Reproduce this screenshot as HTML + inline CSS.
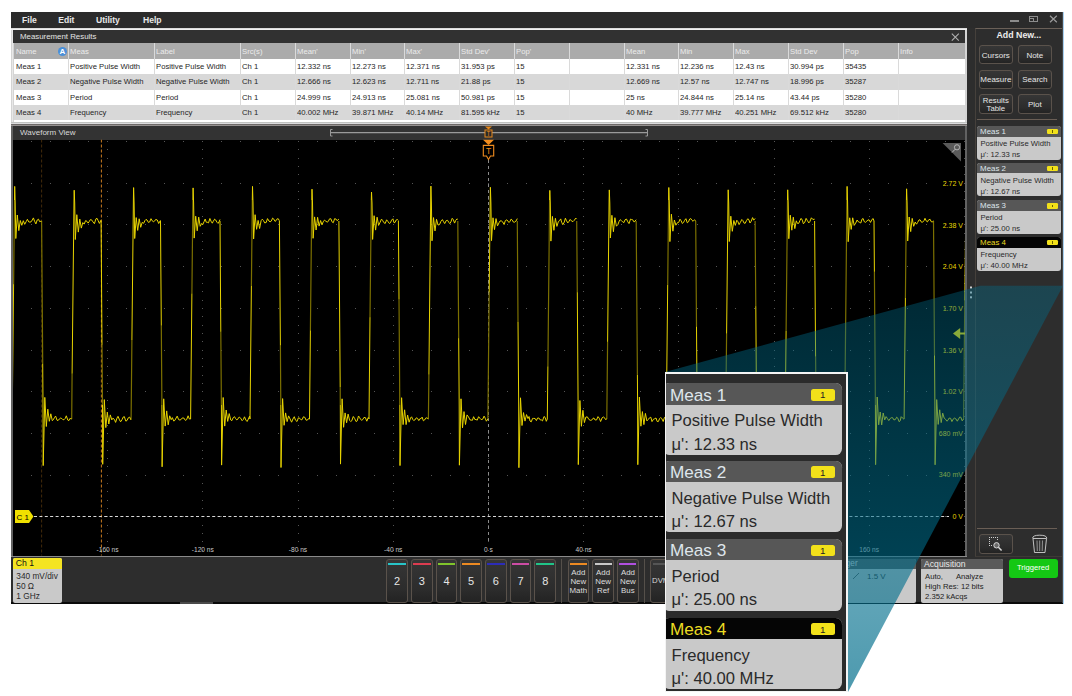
<!DOCTYPE html>
<html><head><meta charset="utf-8">
<style>
*{box-sizing:border-box}
body{margin:0;width:1072px;height:696px;position:relative;overflow:hidden;background:#fff;font-family:"Liberation Sans", sans-serif}
.a{position:absolute}
.t{position:absolute;white-space:nowrap}
.btn{border:1px solid #5a524b;border-radius:3px;background:linear-gradient(#363636,#2c2c2c 70%,#232323)}
</style></head><body>
<div class="a" style="left:11.00px;top:12.30px;width:1052.00px;height:591.00px;background:#2d2d2d;"></div>
<div class="a" style="left:11.00px;top:602.30px;width:1052.00px;height:1.30px;background:#0a0a0a;"></div>
<div class="a" style="left:180.00px;top:602.30px;width:33.00px;height:1.30px;background:#4a4a4a;"></div>
<div class="a" style="left:1061.60px;top:12.30px;width:1.10px;height:591.00px;background:#4a4a4a;"></div>
<div class="a" style="left:1062.70px;top:12.30px;width:1.00px;height:591.30px;background:#a8d0f0;"></div>
<div class="a" style="left:11.00px;top:12.30px;width:1051.00px;height:15.70px;background:#2b2b2b;"></div>
<div class="t" style="top:16.02px;font-size:8.60px;line-height:8.60px;color:#e8e8e8;font-weight:bold;left:22.00px;">File</div>
<div class="t" style="top:16.02px;font-size:8.60px;line-height:8.60px;color:#e8e8e8;font-weight:bold;left:58.20px;">Edit</div>
<div class="t" style="top:16.02px;font-size:8.60px;line-height:8.60px;color:#e8e8e8;font-weight:bold;left:96.00px;">Utility</div>
<div class="t" style="top:16.02px;font-size:8.60px;line-height:8.60px;color:#e8e8e8;font-weight:bold;left:143.00px;">Help</div>
<div class="a" style="left:1010.00px;top:20.20px;width:9.00px;height:1.80px;background:#8c8c8c;"></div>
<div class="a" style="left:1029px;top:15.8px;width:9px;height:6px;border:1px solid #8c8c8c;border-top-width:1.6px"></div>
<div class="a" style="left:1029px;top:18.2px;width:4.5px;height:3.6px;border:1px solid #8c8c8c;border-left:0;border-bottom:0"></div>
<svg class="a" style="left:1049px;top:15px" width="9" height="8"><path d="M1 0.8 L7.8 7.3 M7.8 0.8 L1 7.3" stroke="#9a9a9a" stroke-width="1.2"/></svg>
<div class="a" style="left:11.00px;top:28.00px;width:956.00px;height:96.00px;background:#d4d4d4;"></div>
<div class="a" style="left:11.00px;top:28.00px;width:956.00px;height:1.00px;background:#dcdcdc;"></div>
<div class="a" style="left:11.00px;top:29.00px;width:956.00px;height:1.00px;background:#f0f0f0;"></div>
<div class="a" style="left:12.00px;top:30.00px;width:1.00px;height:92.00px;background:#e8e8e8;"></div>
<div class="a" style="left:13.00px;top:30.00px;width:951.60px;height:13.00px;background:#313131;"></div>
<div class="t" style="top:33.44px;font-size:8.10px;line-height:8.10px;color:#e4e4e4;transform:scaleX(0.970);transform-origin:0 0;left:19.50px;">Measurement Results</div>
<svg class="a" style="left:951px;top:33px" width="9" height="9"><path d="M0.8 0.6 L7.8 7.6 M7.8 0.6 L0.8 7.6" stroke="#b0b0b0" stroke-width="1.1"/></svg>
<div class="a" style="left:14.00px;top:43.00px;width:950.60px;height:16.00px;background:#ababab;"></div><div class="t" style="top:48.14px;font-size:8.10px;line-height:8.10px;color:#ececec;transform:scaleX(0.950);transform-origin:0 0;left:15.50px;">Name</div><div class="t" style="top:48.14px;font-size:8.10px;line-height:8.10px;color:#ececec;transform:scaleX(0.950);transform-origin:0 0;left:69.50px;">Meas</div><div class="t" style="top:48.14px;font-size:8.10px;line-height:8.10px;color:#ececec;transform:scaleX(0.950);transform-origin:0 0;left:155.50px;">Label</div><div class="t" style="top:48.14px;font-size:8.10px;line-height:8.10px;color:#ececec;transform:scaleX(0.950);transform-origin:0 0;left:241.50px;">Src(s)</div><div class="t" style="top:48.14px;font-size:8.10px;line-height:8.10px;color:#ececec;transform:scaleX(0.950);transform-origin:0 0;left:296.50px;">Mean'</div><div class="t" style="top:48.14px;font-size:8.10px;line-height:8.10px;color:#ececec;transform:scaleX(0.950);transform-origin:0 0;left:351.50px;">Min'</div><div class="t" style="top:48.14px;font-size:8.10px;line-height:8.10px;color:#ececec;transform:scaleX(0.950);transform-origin:0 0;left:405.50px;">Max'</div><div class="t" style="top:48.14px;font-size:8.10px;line-height:8.10px;color:#ececec;transform:scaleX(0.950);transform-origin:0 0;left:460.50px;">Std Dev'</div><div class="t" style="top:48.14px;font-size:8.10px;line-height:8.10px;color:#ececec;transform:scaleX(0.950);transform-origin:0 0;left:515.50px;">Pop'</div><div class="t" style="top:48.14px;font-size:8.10px;line-height:8.10px;color:#ececec;transform:scaleX(0.950);transform-origin:0 0;left:625.50px;">Mean</div><div class="t" style="top:48.14px;font-size:8.10px;line-height:8.10px;color:#ececec;transform:scaleX(0.950);transform-origin:0 0;left:679.50px;">Min</div><div class="t" style="top:48.14px;font-size:8.10px;line-height:8.10px;color:#ececec;transform:scaleX(0.950);transform-origin:0 0;left:734.50px;">Max</div><div class="t" style="top:48.14px;font-size:8.10px;line-height:8.10px;color:#ececec;transform:scaleX(0.950);transform-origin:0 0;left:789.50px;">Std Dev</div><div class="t" style="top:48.14px;font-size:8.10px;line-height:8.10px;color:#ececec;transform:scaleX(0.950);transform-origin:0 0;left:844.50px;">Pop</div><div class="t" style="top:48.14px;font-size:8.10px;line-height:8.10px;color:#ececec;transform:scaleX(0.950);transform-origin:0 0;left:899.50px;">Info</div><div class="a" style="left:58px;top:46.8px;width:9px;height:9px;border-radius:50%;background:#4a8fd8"></div><div class="t" style="top:47.63px;font-size:8.00px;line-height:8.00px;color:#fff;font-weight:bold;left:62.50px;width:0;display:flex;justify-content:center;"><span>A</span></div><div class="a" style="left:14.00px;top:59.00px;width:950.60px;height:15.00px;background:#ffffff;"></div><div class="t" style="top:62.84px;font-size:8.10px;line-height:8.10px;color:#262626;transform:scaleX(0.950);transform-origin:0 0;left:16.20px;">Meas 1</div><div class="t" style="top:62.84px;font-size:8.10px;line-height:8.10px;color:#262626;transform:scaleX(0.950);transform-origin:0 0;left:70.20px;">Positive Pulse Width</div><div class="t" style="top:62.84px;font-size:8.10px;line-height:8.10px;color:#262626;transform:scaleX(0.950);transform-origin:0 0;left:156.20px;">Positive Pulse Width</div><div class="t" style="top:62.84px;font-size:8.10px;line-height:8.10px;color:#262626;transform:scaleX(0.950);transform-origin:0 0;left:242.20px;">Ch 1</div><div class="t" style="top:62.84px;font-size:8.10px;line-height:8.10px;color:#262626;transform:scaleX(0.950);transform-origin:0 0;left:297.20px;">12.332 ns</div><div class="t" style="top:62.84px;font-size:8.10px;line-height:8.10px;color:#262626;transform:scaleX(0.950);transform-origin:0 0;left:352.20px;">12.273 ns</div><div class="t" style="top:62.84px;font-size:8.10px;line-height:8.10px;color:#262626;transform:scaleX(0.950);transform-origin:0 0;left:406.20px;">12.371 ns</div><div class="t" style="top:62.84px;font-size:8.10px;line-height:8.10px;color:#262626;transform:scaleX(0.950);transform-origin:0 0;left:461.20px;">31.953 ps</div><div class="t" style="top:62.84px;font-size:8.10px;line-height:8.10px;color:#262626;transform:scaleX(0.950);transform-origin:0 0;left:516.20px;">15</div><div class="t" style="top:62.84px;font-size:8.10px;line-height:8.10px;color:#262626;transform:scaleX(0.950);transform-origin:0 0;left:626.20px;">12.331 ns</div><div class="t" style="top:62.84px;font-size:8.10px;line-height:8.10px;color:#262626;transform:scaleX(0.950);transform-origin:0 0;left:680.20px;">12.236 ns</div><div class="t" style="top:62.84px;font-size:8.10px;line-height:8.10px;color:#262626;transform:scaleX(0.950);transform-origin:0 0;left:735.20px;">12.43 ns</div><div class="t" style="top:62.84px;font-size:8.10px;line-height:8.10px;color:#262626;transform:scaleX(0.950);transform-origin:0 0;left:790.20px;">30.994 ps</div><div class="t" style="top:62.84px;font-size:8.10px;line-height:8.10px;color:#262626;transform:scaleX(0.950);transform-origin:0 0;left:845.20px;">35435</div><div class="a" style="left:14.00px;top:74.00px;width:950.60px;height:16.00px;background:#d8d8d8;"></div><div class="t" style="top:78.27px;font-size:8.10px;line-height:8.10px;color:#262626;transform:scaleX(0.950);transform-origin:0 0;left:16.20px;">Meas 2</div><div class="t" style="top:78.27px;font-size:8.10px;line-height:8.10px;color:#262626;transform:scaleX(0.950);transform-origin:0 0;left:70.20px;">Negative Pulse Width</div><div class="t" style="top:78.27px;font-size:8.10px;line-height:8.10px;color:#262626;transform:scaleX(0.950);transform-origin:0 0;left:156.20px;">Negative Pulse Width</div><div class="t" style="top:78.27px;font-size:8.10px;line-height:8.10px;color:#262626;transform:scaleX(0.950);transform-origin:0 0;left:242.20px;">Ch 1</div><div class="t" style="top:78.27px;font-size:8.10px;line-height:8.10px;color:#262626;transform:scaleX(0.950);transform-origin:0 0;left:297.20px;">12.666 ns</div><div class="t" style="top:78.27px;font-size:8.10px;line-height:8.10px;color:#262626;transform:scaleX(0.950);transform-origin:0 0;left:352.20px;">12.623 ns</div><div class="t" style="top:78.27px;font-size:8.10px;line-height:8.10px;color:#262626;transform:scaleX(0.950);transform-origin:0 0;left:406.20px;">12.711 ns</div><div class="t" style="top:78.27px;font-size:8.10px;line-height:8.10px;color:#262626;transform:scaleX(0.950);transform-origin:0 0;left:461.20px;">21.88 ps</div><div class="t" style="top:78.27px;font-size:8.10px;line-height:8.10px;color:#262626;transform:scaleX(0.950);transform-origin:0 0;left:516.20px;">15</div><div class="t" style="top:78.27px;font-size:8.10px;line-height:8.10px;color:#262626;transform:scaleX(0.950);transform-origin:0 0;left:626.20px;">12.669 ns</div><div class="t" style="top:78.27px;font-size:8.10px;line-height:8.10px;color:#262626;transform:scaleX(0.950);transform-origin:0 0;left:680.20px;">12.57 ns</div><div class="t" style="top:78.27px;font-size:8.10px;line-height:8.10px;color:#262626;transform:scaleX(0.950);transform-origin:0 0;left:735.20px;">12.747 ns</div><div class="t" style="top:78.27px;font-size:8.10px;line-height:8.10px;color:#262626;transform:scaleX(0.950);transform-origin:0 0;left:790.20px;">18.996 ps</div><div class="t" style="top:78.27px;font-size:8.10px;line-height:8.10px;color:#262626;transform:scaleX(0.950);transform-origin:0 0;left:845.20px;">35287</div><div class="a" style="left:14.00px;top:90.00px;width:950.60px;height:15.00px;background:#ffffff;"></div><div class="t" style="top:93.70px;font-size:8.10px;line-height:8.10px;color:#262626;transform:scaleX(0.950);transform-origin:0 0;left:16.20px;">Meas 3</div><div class="t" style="top:93.70px;font-size:8.10px;line-height:8.10px;color:#262626;transform:scaleX(0.950);transform-origin:0 0;left:70.20px;">Period</div><div class="t" style="top:93.70px;font-size:8.10px;line-height:8.10px;color:#262626;transform:scaleX(0.950);transform-origin:0 0;left:156.20px;">Period</div><div class="t" style="top:93.70px;font-size:8.10px;line-height:8.10px;color:#262626;transform:scaleX(0.950);transform-origin:0 0;left:242.20px;">Ch 1</div><div class="t" style="top:93.70px;font-size:8.10px;line-height:8.10px;color:#262626;transform:scaleX(0.950);transform-origin:0 0;left:297.20px;">24.999 ns</div><div class="t" style="top:93.70px;font-size:8.10px;line-height:8.10px;color:#262626;transform:scaleX(0.950);transform-origin:0 0;left:352.20px;">24.913 ns</div><div class="t" style="top:93.70px;font-size:8.10px;line-height:8.10px;color:#262626;transform:scaleX(0.950);transform-origin:0 0;left:406.20px;">25.081 ns</div><div class="t" style="top:93.70px;font-size:8.10px;line-height:8.10px;color:#262626;transform:scaleX(0.950);transform-origin:0 0;left:461.20px;">50.981 ps</div><div class="t" style="top:93.70px;font-size:8.10px;line-height:8.10px;color:#262626;transform:scaleX(0.950);transform-origin:0 0;left:516.20px;">15</div><div class="t" style="top:93.70px;font-size:8.10px;line-height:8.10px;color:#262626;transform:scaleX(0.950);transform-origin:0 0;left:626.20px;">25 ns</div><div class="t" style="top:93.70px;font-size:8.10px;line-height:8.10px;color:#262626;transform:scaleX(0.950);transform-origin:0 0;left:680.20px;">24.844 ns</div><div class="t" style="top:93.70px;font-size:8.10px;line-height:8.10px;color:#262626;transform:scaleX(0.950);transform-origin:0 0;left:735.20px;">25.14 ns</div><div class="t" style="top:93.70px;font-size:8.10px;line-height:8.10px;color:#262626;transform:scaleX(0.950);transform-origin:0 0;left:790.20px;">43.44 ps</div><div class="t" style="top:93.70px;font-size:8.10px;line-height:8.10px;color:#262626;transform:scaleX(0.950);transform-origin:0 0;left:845.20px;">35280</div><div class="a" style="left:14.00px;top:105.00px;width:950.60px;height:15.00px;background:#d8d8d8;"></div><div class="t" style="top:109.13px;font-size:8.10px;line-height:8.10px;color:#262626;transform:scaleX(0.950);transform-origin:0 0;left:16.20px;">Meas 4</div><div class="t" style="top:109.13px;font-size:8.10px;line-height:8.10px;color:#262626;transform:scaleX(0.950);transform-origin:0 0;left:70.20px;">Frequency</div><div class="t" style="top:109.13px;font-size:8.10px;line-height:8.10px;color:#262626;transform:scaleX(0.950);transform-origin:0 0;left:156.20px;">Frequency</div><div class="t" style="top:109.13px;font-size:8.10px;line-height:8.10px;color:#262626;transform:scaleX(0.950);transform-origin:0 0;left:242.20px;">Ch 1</div><div class="t" style="top:109.13px;font-size:8.10px;line-height:8.10px;color:#262626;transform:scaleX(0.950);transform-origin:0 0;left:297.20px;">40.002 MHz</div><div class="t" style="top:109.13px;font-size:8.10px;line-height:8.10px;color:#262626;transform:scaleX(0.950);transform-origin:0 0;left:352.20px;">39.871 MHz</div><div class="t" style="top:109.13px;font-size:8.10px;line-height:8.10px;color:#262626;transform:scaleX(0.950);transform-origin:0 0;left:406.20px;">40.14 MHz</div><div class="t" style="top:109.13px;font-size:8.10px;line-height:8.10px;color:#262626;transform:scaleX(0.950);transform-origin:0 0;left:461.20px;">81.595 kHz</div><div class="t" style="top:109.13px;font-size:8.10px;line-height:8.10px;color:#262626;transform:scaleX(0.950);transform-origin:0 0;left:516.20px;">15</div><div class="t" style="top:109.13px;font-size:8.10px;line-height:8.10px;color:#262626;transform:scaleX(0.950);transform-origin:0 0;left:626.20px;">40 MHz</div><div class="t" style="top:109.13px;font-size:8.10px;line-height:8.10px;color:#262626;transform:scaleX(0.950);transform-origin:0 0;left:680.20px;">39.777 MHz</div><div class="t" style="top:109.13px;font-size:8.10px;line-height:8.10px;color:#262626;transform:scaleX(0.950);transform-origin:0 0;left:735.20px;">40.251 MHz</div><div class="t" style="top:109.13px;font-size:8.10px;line-height:8.10px;color:#262626;transform:scaleX(0.950);transform-origin:0 0;left:790.20px;">69.512 kHz</div><div class="t" style="top:109.13px;font-size:8.10px;line-height:8.10px;color:#262626;transform:scaleX(0.950);transform-origin:0 0;left:845.20px;">35280</div><div class="a" style="left:68.00px;top:43.00px;width:1.00px;height:77.00px;background:#dadada;"></div><div class="a" style="left:154.00px;top:43.00px;width:1.00px;height:77.00px;background:#dadada;"></div><div class="a" style="left:240.00px;top:43.00px;width:1.00px;height:77.00px;background:#dadada;"></div><div class="a" style="left:295.00px;top:43.00px;width:1.00px;height:77.00px;background:#dadada;"></div><div class="a" style="left:350.00px;top:43.00px;width:1.00px;height:77.00px;background:#dadada;"></div><div class="a" style="left:404.00px;top:43.00px;width:1.00px;height:77.00px;background:#dadada;"></div><div class="a" style="left:459.00px;top:43.00px;width:1.00px;height:77.00px;background:#dadada;"></div><div class="a" style="left:514.00px;top:43.00px;width:1.00px;height:77.00px;background:#dadada;"></div><div class="a" style="left:569.00px;top:43.00px;width:1.00px;height:77.00px;background:#dadada;"></div><div class="a" style="left:624.00px;top:43.00px;width:1.00px;height:77.00px;background:#dadada;"></div><div class="a" style="left:678.00px;top:43.00px;width:1.00px;height:77.00px;background:#dadada;"></div><div class="a" style="left:733.00px;top:43.00px;width:1.00px;height:77.00px;background:#dadada;"></div><div class="a" style="left:788.00px;top:43.00px;width:1.00px;height:77.00px;background:#dadada;"></div><div class="a" style="left:843.00px;top:43.00px;width:1.00px;height:77.00px;background:#dadada;"></div><div class="a" style="left:898.00px;top:43.00px;width:1.00px;height:77.00px;background:#dadada;"></div>
<div class="a" style="left:14.00px;top:120.00px;width:950.60px;height:2.00px;background:#ffffff;"></div>
<div class="a" style="left:11.00px;top:122.00px;width:956.00px;height:1.00px;background:#c0c2c0;"></div>
<div class="a" style="left:11.00px;top:123.00px;width:956.00px;height:1.00px;background:#dcdcde;"></div>
<div class="a" style="left:11.00px;top:124.00px;width:956.00px;height:1.00px;background:#6e6a68;"></div>
<div class="a" style="left:11.00px;top:125.00px;width:956.00px;height:432.00px;background:#959190;"></div>
<div class="a" style="left:11.00px;top:126.00px;width:956.00px;height:431.00px;background:#626262;"></div>
<div class="a" style="left:13.00px;top:126.00px;width:952.00px;height:13.50px;background:#333333;"></div>
<div class="t" style="top:128.73px;font-size:8.00px;line-height:8.00px;color:#d8d8d8;left:20.00px;">Waveform View</div>
<div class="a" style="left:13.00px;top:139.50px;width:952.00px;height:416.20px;background:#000;"></div>
<div class="a" style="left:11.00px;top:555.70px;width:956.00px;height:1.30px;background:#a0a0a0;"></div>
<svg class="a" style="left:0;top:0" width="1072" height="696" viewBox="0 0 1072 696">
  <defs><clipPath id="pc"><rect x="13" y="139.5" width="952" height="416"/></clipPath></defs>
  <g clip-path="url(#pc)">
    <path d="M12 141h1v1h-1zM12 149h1v1h-1zM12 158h1v1h-1zM12 166h1v1h-1zM12 174h1v1h-1zM12 183h1v1h-1zM12 191h1v1h-1zM12 199h1v1h-1zM12 208h1v1h-1zM12 216h1v1h-1zM12 224h1v1h-1zM12 233h1v1h-1zM12 241h1v1h-1zM12 249h1v1h-1zM12 258h1v1h-1zM12 266h1v1h-1zM12 275h1v1h-1zM12 283h1v1h-1zM12 291h1v1h-1zM12 300h1v1h-1zM12 308h1v1h-1zM12 316h1v1h-1zM12 325h1v1h-1zM12 333h1v1h-1zM12 341h1v1h-1zM12 350h1v1h-1zM12 358h1v1h-1zM12 366h1v1h-1zM12 375h1v1h-1zM12 383h1v1h-1zM12 391h1v1h-1zM12 400h1v1h-1zM12 408h1v1h-1zM12 416h1v1h-1zM12 425h1v1h-1zM12 433h1v1h-1zM12 441h1v1h-1zM12 450h1v1h-1zM12 458h1v1h-1zM12 466h1v1h-1zM12 475h1v1h-1zM12 483h1v1h-1zM12 491h1v1h-1zM12 500h1v1h-1zM12 508h1v1h-1zM12 516h1v1h-1zM12 525h1v1h-1zM12 533h1v1h-1zM12 541h1v1h-1zM12 550h1v1h-1zM31 141h1v1h-1zM31 183h1v1h-1zM31 224h1v1h-1zM31 266h1v1h-1zM31 308h1v1h-1zM31 350h1v1h-1zM31 391h1v1h-1zM31 433h1v1h-1zM31 475h1v1h-1zM31 516h1v1h-1zM50 141h1v1h-1zM50 183h1v1h-1zM50 224h1v1h-1zM50 266h1v1h-1zM50 308h1v1h-1zM50 350h1v1h-1zM50 391h1v1h-1zM50 433h1v1h-1zM50 475h1v1h-1zM50 516h1v1h-1zM69 141h1v1h-1zM69 183h1v1h-1zM69 224h1v1h-1zM69 266h1v1h-1zM69 308h1v1h-1zM69 350h1v1h-1zM69 391h1v1h-1zM69 433h1v1h-1zM69 475h1v1h-1zM69 516h1v1h-1zM88 141h1v1h-1zM88 183h1v1h-1zM88 224h1v1h-1zM88 266h1v1h-1zM88 308h1v1h-1zM88 350h1v1h-1zM88 391h1v1h-1zM88 433h1v1h-1zM88 475h1v1h-1zM88 516h1v1h-1zM107 141h1v1h-1zM107 149h1v1h-1zM107 158h1v1h-1zM107 166h1v1h-1zM107 174h1v1h-1zM107 183h1v1h-1zM107 191h1v1h-1zM107 199h1v1h-1zM107 208h1v1h-1zM107 216h1v1h-1zM107 224h1v1h-1zM107 233h1v1h-1zM107 241h1v1h-1zM107 249h1v1h-1zM107 258h1v1h-1zM107 266h1v1h-1zM107 275h1v1h-1zM107 283h1v1h-1zM107 291h1v1h-1zM107 300h1v1h-1zM107 308h1v1h-1zM107 316h1v1h-1zM107 325h1v1h-1zM107 333h1v1h-1zM107 341h1v1h-1zM107 350h1v1h-1zM107 358h1v1h-1zM107 366h1v1h-1zM107 375h1v1h-1zM107 383h1v1h-1zM107 391h1v1h-1zM107 400h1v1h-1zM107 408h1v1h-1zM107 416h1v1h-1zM107 425h1v1h-1zM107 433h1v1h-1zM107 441h1v1h-1zM107 450h1v1h-1zM107 458h1v1h-1zM107 466h1v1h-1zM107 475h1v1h-1zM107 483h1v1h-1zM107 491h1v1h-1zM107 500h1v1h-1zM107 508h1v1h-1zM107 516h1v1h-1zM107 525h1v1h-1zM107 533h1v1h-1zM107 541h1v1h-1zM107 550h1v1h-1zM126 141h1v1h-1zM126 183h1v1h-1zM126 224h1v1h-1zM126 266h1v1h-1zM126 308h1v1h-1zM126 350h1v1h-1zM126 391h1v1h-1zM126 433h1v1h-1zM126 475h1v1h-1zM126 516h1v1h-1zM145 141h1v1h-1zM145 183h1v1h-1zM145 224h1v1h-1zM145 266h1v1h-1zM145 308h1v1h-1zM145 350h1v1h-1zM145 391h1v1h-1zM145 433h1v1h-1zM145 475h1v1h-1zM145 516h1v1h-1zM164 141h1v1h-1zM164 183h1v1h-1zM164 224h1v1h-1zM164 266h1v1h-1zM164 308h1v1h-1zM164 350h1v1h-1zM164 391h1v1h-1zM164 433h1v1h-1zM164 475h1v1h-1zM164 516h1v1h-1zM183 141h1v1h-1zM183 183h1v1h-1zM183 224h1v1h-1zM183 266h1v1h-1zM183 308h1v1h-1zM183 350h1v1h-1zM183 391h1v1h-1zM183 433h1v1h-1zM183 475h1v1h-1zM183 516h1v1h-1zM202 141h1v1h-1zM202 149h1v1h-1zM202 158h1v1h-1zM202 166h1v1h-1zM202 174h1v1h-1zM202 183h1v1h-1zM202 191h1v1h-1zM202 199h1v1h-1zM202 208h1v1h-1zM202 216h1v1h-1zM202 224h1v1h-1zM202 233h1v1h-1zM202 241h1v1h-1zM202 249h1v1h-1zM202 258h1v1h-1zM202 266h1v1h-1zM202 275h1v1h-1zM202 283h1v1h-1zM202 291h1v1h-1zM202 300h1v1h-1zM202 308h1v1h-1zM202 316h1v1h-1zM202 325h1v1h-1zM202 333h1v1h-1zM202 341h1v1h-1zM202 350h1v1h-1zM202 358h1v1h-1zM202 366h1v1h-1zM202 375h1v1h-1zM202 383h1v1h-1zM202 391h1v1h-1zM202 400h1v1h-1zM202 408h1v1h-1zM202 416h1v1h-1zM202 425h1v1h-1zM202 433h1v1h-1zM202 441h1v1h-1zM202 450h1v1h-1zM202 458h1v1h-1zM202 466h1v1h-1zM202 475h1v1h-1zM202 483h1v1h-1zM202 491h1v1h-1zM202 500h1v1h-1zM202 508h1v1h-1zM202 516h1v1h-1zM202 525h1v1h-1zM202 533h1v1h-1zM202 541h1v1h-1zM202 550h1v1h-1zM221 141h1v1h-1zM221 183h1v1h-1zM221 224h1v1h-1zM221 266h1v1h-1zM221 308h1v1h-1zM221 350h1v1h-1zM221 391h1v1h-1zM221 433h1v1h-1zM221 475h1v1h-1zM221 516h1v1h-1zM240 141h1v1h-1zM240 183h1v1h-1zM240 224h1v1h-1zM240 266h1v1h-1zM240 308h1v1h-1zM240 350h1v1h-1zM240 391h1v1h-1zM240 433h1v1h-1zM240 475h1v1h-1zM240 516h1v1h-1zM259 141h1v1h-1zM259 183h1v1h-1zM259 224h1v1h-1zM259 266h1v1h-1zM259 308h1v1h-1zM259 350h1v1h-1zM259 391h1v1h-1zM259 433h1v1h-1zM259 475h1v1h-1zM259 516h1v1h-1zM278 141h1v1h-1zM278 183h1v1h-1zM278 224h1v1h-1zM278 266h1v1h-1zM278 308h1v1h-1zM278 350h1v1h-1zM278 391h1v1h-1zM278 433h1v1h-1zM278 475h1v1h-1zM278 516h1v1h-1zM298 141h1v1h-1zM298 149h1v1h-1zM298 158h1v1h-1zM298 166h1v1h-1zM298 174h1v1h-1zM298 183h1v1h-1zM298 191h1v1h-1zM298 199h1v1h-1zM298 208h1v1h-1zM298 216h1v1h-1zM298 224h1v1h-1zM298 233h1v1h-1zM298 241h1v1h-1zM298 249h1v1h-1zM298 258h1v1h-1zM298 266h1v1h-1zM298 275h1v1h-1zM298 283h1v1h-1zM298 291h1v1h-1zM298 300h1v1h-1zM298 308h1v1h-1zM298 316h1v1h-1zM298 325h1v1h-1zM298 333h1v1h-1zM298 341h1v1h-1zM298 350h1v1h-1zM298 358h1v1h-1zM298 366h1v1h-1zM298 375h1v1h-1zM298 383h1v1h-1zM298 391h1v1h-1zM298 400h1v1h-1zM298 408h1v1h-1zM298 416h1v1h-1zM298 425h1v1h-1zM298 433h1v1h-1zM298 441h1v1h-1zM298 450h1v1h-1zM298 458h1v1h-1zM298 466h1v1h-1zM298 475h1v1h-1zM298 483h1v1h-1zM298 491h1v1h-1zM298 500h1v1h-1zM298 508h1v1h-1zM298 516h1v1h-1zM298 525h1v1h-1zM298 533h1v1h-1zM298 541h1v1h-1zM298 550h1v1h-1zM317 141h1v1h-1zM317 183h1v1h-1zM317 224h1v1h-1zM317 266h1v1h-1zM317 308h1v1h-1zM317 350h1v1h-1zM317 391h1v1h-1zM317 433h1v1h-1zM317 475h1v1h-1zM317 516h1v1h-1zM336 141h1v1h-1zM336 183h1v1h-1zM336 224h1v1h-1zM336 266h1v1h-1zM336 308h1v1h-1zM336 350h1v1h-1zM336 391h1v1h-1zM336 433h1v1h-1zM336 475h1v1h-1zM336 516h1v1h-1zM355 141h1v1h-1zM355 183h1v1h-1zM355 224h1v1h-1zM355 266h1v1h-1zM355 308h1v1h-1zM355 350h1v1h-1zM355 391h1v1h-1zM355 433h1v1h-1zM355 475h1v1h-1zM355 516h1v1h-1zM374 141h1v1h-1zM374 183h1v1h-1zM374 224h1v1h-1zM374 266h1v1h-1zM374 308h1v1h-1zM374 350h1v1h-1zM374 391h1v1h-1zM374 433h1v1h-1zM374 475h1v1h-1zM374 516h1v1h-1zM393 141h1v1h-1zM393 149h1v1h-1zM393 158h1v1h-1zM393 166h1v1h-1zM393 174h1v1h-1zM393 183h1v1h-1zM393 191h1v1h-1zM393 199h1v1h-1zM393 208h1v1h-1zM393 216h1v1h-1zM393 224h1v1h-1zM393 233h1v1h-1zM393 241h1v1h-1zM393 249h1v1h-1zM393 258h1v1h-1zM393 266h1v1h-1zM393 275h1v1h-1zM393 283h1v1h-1zM393 291h1v1h-1zM393 300h1v1h-1zM393 308h1v1h-1zM393 316h1v1h-1zM393 325h1v1h-1zM393 333h1v1h-1zM393 341h1v1h-1zM393 350h1v1h-1zM393 358h1v1h-1zM393 366h1v1h-1zM393 375h1v1h-1zM393 383h1v1h-1zM393 391h1v1h-1zM393 400h1v1h-1zM393 408h1v1h-1zM393 416h1v1h-1zM393 425h1v1h-1zM393 433h1v1h-1zM393 441h1v1h-1zM393 450h1v1h-1zM393 458h1v1h-1zM393 466h1v1h-1zM393 475h1v1h-1zM393 483h1v1h-1zM393 491h1v1h-1zM393 500h1v1h-1zM393 508h1v1h-1zM393 516h1v1h-1zM393 525h1v1h-1zM393 533h1v1h-1zM393 541h1v1h-1zM393 550h1v1h-1zM412 141h1v1h-1zM412 183h1v1h-1zM412 224h1v1h-1zM412 266h1v1h-1zM412 308h1v1h-1zM412 350h1v1h-1zM412 391h1v1h-1zM412 433h1v1h-1zM412 475h1v1h-1zM412 516h1v1h-1zM431 141h1v1h-1zM431 183h1v1h-1zM431 224h1v1h-1zM431 266h1v1h-1zM431 308h1v1h-1zM431 350h1v1h-1zM431 391h1v1h-1zM431 433h1v1h-1zM431 475h1v1h-1zM431 516h1v1h-1zM450 141h1v1h-1zM450 183h1v1h-1zM450 224h1v1h-1zM450 266h1v1h-1zM450 308h1v1h-1zM450 350h1v1h-1zM450 391h1v1h-1zM450 433h1v1h-1zM450 475h1v1h-1zM450 516h1v1h-1zM469 141h1v1h-1zM469 183h1v1h-1zM469 224h1v1h-1zM469 266h1v1h-1zM469 308h1v1h-1zM469 350h1v1h-1zM469 391h1v1h-1zM469 433h1v1h-1zM469 475h1v1h-1zM469 516h1v1h-1zM488 141h1v1h-1zM488 149h1v1h-1zM488 158h1v1h-1zM488 166h1v1h-1zM488 174h1v1h-1zM488 183h1v1h-1zM488 191h1v1h-1zM488 199h1v1h-1zM488 208h1v1h-1zM488 216h1v1h-1zM488 224h1v1h-1zM488 233h1v1h-1zM488 241h1v1h-1zM488 249h1v1h-1zM488 258h1v1h-1zM488 266h1v1h-1zM488 275h1v1h-1zM488 283h1v1h-1zM488 291h1v1h-1zM488 300h1v1h-1zM488 308h1v1h-1zM488 316h1v1h-1zM488 325h1v1h-1zM488 333h1v1h-1zM488 341h1v1h-1zM488 350h1v1h-1zM488 358h1v1h-1zM488 366h1v1h-1zM488 375h1v1h-1zM488 383h1v1h-1zM488 391h1v1h-1zM488 400h1v1h-1zM488 408h1v1h-1zM488 416h1v1h-1zM488 425h1v1h-1zM488 433h1v1h-1zM488 441h1v1h-1zM488 450h1v1h-1zM488 458h1v1h-1zM488 466h1v1h-1zM488 475h1v1h-1zM488 483h1v1h-1zM488 491h1v1h-1zM488 500h1v1h-1zM488 508h1v1h-1zM488 516h1v1h-1zM488 525h1v1h-1zM488 533h1v1h-1zM488 541h1v1h-1zM488 550h1v1h-1zM507 141h1v1h-1zM507 183h1v1h-1zM507 224h1v1h-1zM507 266h1v1h-1zM507 308h1v1h-1zM507 350h1v1h-1zM507 391h1v1h-1zM507 433h1v1h-1zM507 475h1v1h-1zM507 516h1v1h-1zM526 141h1v1h-1zM526 183h1v1h-1zM526 224h1v1h-1zM526 266h1v1h-1zM526 308h1v1h-1zM526 350h1v1h-1zM526 391h1v1h-1zM526 433h1v1h-1zM526 475h1v1h-1zM526 516h1v1h-1zM545 141h1v1h-1zM545 183h1v1h-1zM545 224h1v1h-1zM545 266h1v1h-1zM545 308h1v1h-1zM545 350h1v1h-1zM545 391h1v1h-1zM545 433h1v1h-1zM545 475h1v1h-1zM545 516h1v1h-1zM564 141h1v1h-1zM564 183h1v1h-1zM564 224h1v1h-1zM564 266h1v1h-1zM564 308h1v1h-1zM564 350h1v1h-1zM564 391h1v1h-1zM564 433h1v1h-1zM564 475h1v1h-1zM564 516h1v1h-1zM583 141h1v1h-1zM583 149h1v1h-1zM583 158h1v1h-1zM583 166h1v1h-1zM583 174h1v1h-1zM583 183h1v1h-1zM583 191h1v1h-1zM583 199h1v1h-1zM583 208h1v1h-1zM583 216h1v1h-1zM583 224h1v1h-1zM583 233h1v1h-1zM583 241h1v1h-1zM583 249h1v1h-1zM583 258h1v1h-1zM583 266h1v1h-1zM583 275h1v1h-1zM583 283h1v1h-1zM583 291h1v1h-1zM583 300h1v1h-1zM583 308h1v1h-1zM583 316h1v1h-1zM583 325h1v1h-1zM583 333h1v1h-1zM583 341h1v1h-1zM583 350h1v1h-1zM583 358h1v1h-1zM583 366h1v1h-1zM583 375h1v1h-1zM583 383h1v1h-1zM583 391h1v1h-1zM583 400h1v1h-1zM583 408h1v1h-1zM583 416h1v1h-1zM583 425h1v1h-1zM583 433h1v1h-1zM583 441h1v1h-1zM583 450h1v1h-1zM583 458h1v1h-1zM583 466h1v1h-1zM583 475h1v1h-1zM583 483h1v1h-1zM583 491h1v1h-1zM583 500h1v1h-1zM583 508h1v1h-1zM583 516h1v1h-1zM583 525h1v1h-1zM583 533h1v1h-1zM583 541h1v1h-1zM583 550h1v1h-1zM602 141h1v1h-1zM602 183h1v1h-1zM602 224h1v1h-1zM602 266h1v1h-1zM602 308h1v1h-1zM602 350h1v1h-1zM602 391h1v1h-1zM602 433h1v1h-1zM602 475h1v1h-1zM602 516h1v1h-1zM621 141h1v1h-1zM621 183h1v1h-1zM621 224h1v1h-1zM621 266h1v1h-1zM621 308h1v1h-1zM621 350h1v1h-1zM621 391h1v1h-1zM621 433h1v1h-1zM621 475h1v1h-1zM621 516h1v1h-1zM640 141h1v1h-1zM640 183h1v1h-1zM640 224h1v1h-1zM640 266h1v1h-1zM640 308h1v1h-1zM640 350h1v1h-1zM640 391h1v1h-1zM640 433h1v1h-1zM640 475h1v1h-1zM640 516h1v1h-1zM659 141h1v1h-1zM659 183h1v1h-1zM659 224h1v1h-1zM659 266h1v1h-1zM659 308h1v1h-1zM659 350h1v1h-1zM659 391h1v1h-1zM659 433h1v1h-1zM659 475h1v1h-1zM659 516h1v1h-1zM678 141h1v1h-1zM678 149h1v1h-1zM678 158h1v1h-1zM678 166h1v1h-1zM678 174h1v1h-1zM678 183h1v1h-1zM678 191h1v1h-1zM678 199h1v1h-1zM678 208h1v1h-1zM678 216h1v1h-1zM678 224h1v1h-1zM678 233h1v1h-1zM678 241h1v1h-1zM678 249h1v1h-1zM678 258h1v1h-1zM678 266h1v1h-1zM678 275h1v1h-1zM678 283h1v1h-1zM678 291h1v1h-1zM678 300h1v1h-1zM678 308h1v1h-1zM678 316h1v1h-1zM678 325h1v1h-1zM678 333h1v1h-1zM678 341h1v1h-1zM678 350h1v1h-1zM678 358h1v1h-1zM678 366h1v1h-1zM678 375h1v1h-1zM678 383h1v1h-1zM678 391h1v1h-1zM678 400h1v1h-1zM678 408h1v1h-1zM678 416h1v1h-1zM678 425h1v1h-1zM678 433h1v1h-1zM678 441h1v1h-1zM678 450h1v1h-1zM678 458h1v1h-1zM678 466h1v1h-1zM678 475h1v1h-1zM678 483h1v1h-1zM678 491h1v1h-1zM678 500h1v1h-1zM678 508h1v1h-1zM678 516h1v1h-1zM678 525h1v1h-1zM678 533h1v1h-1zM678 541h1v1h-1zM678 550h1v1h-1zM697 141h1v1h-1zM697 183h1v1h-1zM697 224h1v1h-1zM697 266h1v1h-1zM697 308h1v1h-1zM697 350h1v1h-1zM697 391h1v1h-1zM697 433h1v1h-1zM697 475h1v1h-1zM697 516h1v1h-1zM716 141h1v1h-1zM716 183h1v1h-1zM716 224h1v1h-1zM716 266h1v1h-1zM716 308h1v1h-1zM716 350h1v1h-1zM716 391h1v1h-1zM716 433h1v1h-1zM716 475h1v1h-1zM716 516h1v1h-1zM735 141h1v1h-1zM735 183h1v1h-1zM735 224h1v1h-1zM735 266h1v1h-1zM735 308h1v1h-1zM735 350h1v1h-1zM735 391h1v1h-1zM735 433h1v1h-1zM735 475h1v1h-1zM735 516h1v1h-1zM754 141h1v1h-1zM754 183h1v1h-1zM754 224h1v1h-1zM754 266h1v1h-1zM754 308h1v1h-1zM754 350h1v1h-1zM754 391h1v1h-1zM754 433h1v1h-1zM754 475h1v1h-1zM754 516h1v1h-1zM774 141h1v1h-1zM774 149h1v1h-1zM774 158h1v1h-1zM774 166h1v1h-1zM774 174h1v1h-1zM774 183h1v1h-1zM774 191h1v1h-1zM774 199h1v1h-1zM774 208h1v1h-1zM774 216h1v1h-1zM774 224h1v1h-1zM774 233h1v1h-1zM774 241h1v1h-1zM774 249h1v1h-1zM774 258h1v1h-1zM774 266h1v1h-1zM774 275h1v1h-1zM774 283h1v1h-1zM774 291h1v1h-1zM774 300h1v1h-1zM774 308h1v1h-1zM774 316h1v1h-1zM774 325h1v1h-1zM774 333h1v1h-1zM774 341h1v1h-1zM774 350h1v1h-1zM774 358h1v1h-1zM774 366h1v1h-1zM774 375h1v1h-1zM774 383h1v1h-1zM774 391h1v1h-1zM774 400h1v1h-1zM774 408h1v1h-1zM774 416h1v1h-1zM774 425h1v1h-1zM774 433h1v1h-1zM774 441h1v1h-1zM774 450h1v1h-1zM774 458h1v1h-1zM774 466h1v1h-1zM774 475h1v1h-1zM774 483h1v1h-1zM774 491h1v1h-1zM774 500h1v1h-1zM774 508h1v1h-1zM774 516h1v1h-1zM774 525h1v1h-1zM774 533h1v1h-1zM774 541h1v1h-1zM774 550h1v1h-1zM793 141h1v1h-1zM793 183h1v1h-1zM793 224h1v1h-1zM793 266h1v1h-1zM793 308h1v1h-1zM793 350h1v1h-1zM793 391h1v1h-1zM793 433h1v1h-1zM793 475h1v1h-1zM793 516h1v1h-1zM812 141h1v1h-1zM812 183h1v1h-1zM812 224h1v1h-1zM812 266h1v1h-1zM812 308h1v1h-1zM812 350h1v1h-1zM812 391h1v1h-1zM812 433h1v1h-1zM812 475h1v1h-1zM812 516h1v1h-1zM831 141h1v1h-1zM831 183h1v1h-1zM831 224h1v1h-1zM831 266h1v1h-1zM831 308h1v1h-1zM831 350h1v1h-1zM831 391h1v1h-1zM831 433h1v1h-1zM831 475h1v1h-1zM831 516h1v1h-1zM850 141h1v1h-1zM850 183h1v1h-1zM850 224h1v1h-1zM850 266h1v1h-1zM850 308h1v1h-1zM850 350h1v1h-1zM850 391h1v1h-1zM850 433h1v1h-1zM850 475h1v1h-1zM850 516h1v1h-1zM869 141h1v1h-1zM869 149h1v1h-1zM869 158h1v1h-1zM869 166h1v1h-1zM869 174h1v1h-1zM869 183h1v1h-1zM869 191h1v1h-1zM869 199h1v1h-1zM869 208h1v1h-1zM869 216h1v1h-1zM869 224h1v1h-1zM869 233h1v1h-1zM869 241h1v1h-1zM869 249h1v1h-1zM869 258h1v1h-1zM869 266h1v1h-1zM869 275h1v1h-1zM869 283h1v1h-1zM869 291h1v1h-1zM869 300h1v1h-1zM869 308h1v1h-1zM869 316h1v1h-1zM869 325h1v1h-1zM869 333h1v1h-1zM869 341h1v1h-1zM869 350h1v1h-1zM869 358h1v1h-1zM869 366h1v1h-1zM869 375h1v1h-1zM869 383h1v1h-1zM869 391h1v1h-1zM869 400h1v1h-1zM869 408h1v1h-1zM869 416h1v1h-1zM869 425h1v1h-1zM869 433h1v1h-1zM869 441h1v1h-1zM869 450h1v1h-1zM869 458h1v1h-1zM869 466h1v1h-1zM869 475h1v1h-1zM869 483h1v1h-1zM869 491h1v1h-1zM869 500h1v1h-1zM869 508h1v1h-1zM869 516h1v1h-1zM869 525h1v1h-1zM869 533h1v1h-1zM869 541h1v1h-1zM869 550h1v1h-1zM888 141h1v1h-1zM888 183h1v1h-1zM888 224h1v1h-1zM888 266h1v1h-1zM888 308h1v1h-1zM888 350h1v1h-1zM888 391h1v1h-1zM888 433h1v1h-1zM888 475h1v1h-1zM888 516h1v1h-1zM907 141h1v1h-1zM907 183h1v1h-1zM907 224h1v1h-1zM907 266h1v1h-1zM907 308h1v1h-1zM907 350h1v1h-1zM907 391h1v1h-1zM907 433h1v1h-1zM907 475h1v1h-1zM907 516h1v1h-1zM926 141h1v1h-1zM926 183h1v1h-1zM926 224h1v1h-1zM926 266h1v1h-1zM926 308h1v1h-1zM926 350h1v1h-1zM926 391h1v1h-1zM926 433h1v1h-1zM926 475h1v1h-1zM926 516h1v1h-1zM945 141h1v1h-1zM945 183h1v1h-1zM945 224h1v1h-1zM945 266h1v1h-1zM945 308h1v1h-1zM945 350h1v1h-1zM945 391h1v1h-1zM945 433h1v1h-1zM945 475h1v1h-1zM945 516h1v1h-1zM964 141h1v1h-1zM964 149h1v1h-1zM964 158h1v1h-1zM964 166h1v1h-1zM964 174h1v1h-1zM964 183h1v1h-1zM964 191h1v1h-1zM964 199h1v1h-1zM964 208h1v1h-1zM964 216h1v1h-1zM964 224h1v1h-1zM964 233h1v1h-1zM964 241h1v1h-1zM964 249h1v1h-1zM964 258h1v1h-1zM964 266h1v1h-1zM964 275h1v1h-1zM964 283h1v1h-1zM964 291h1v1h-1zM964 300h1v1h-1zM964 308h1v1h-1zM964 316h1v1h-1zM964 325h1v1h-1zM964 333h1v1h-1zM964 341h1v1h-1zM964 350h1v1h-1zM964 358h1v1h-1zM964 366h1v1h-1zM964 375h1v1h-1zM964 383h1v1h-1zM964 391h1v1h-1zM964 400h1v1h-1zM964 408h1v1h-1zM964 416h1v1h-1zM964 425h1v1h-1zM964 433h1v1h-1zM964 441h1v1h-1zM964 450h1v1h-1zM964 458h1v1h-1zM964 466h1v1h-1zM964 475h1v1h-1zM964 483h1v1h-1zM964 491h1v1h-1zM964 500h1v1h-1zM964 508h1v1h-1zM964 516h1v1h-1zM964 525h1v1h-1zM964 533h1v1h-1zM964 541h1v1h-1zM964 550h1v1h-1z" fill="#555555"/>
    <line x1="488.5" y1="160" x2="488.5" y2="544" stroke="#8a8a8a" stroke-width="1" stroke-dasharray="3 3"/>
    <line x1="41.6" y1="139.5" x2="41.6" y2="556" stroke="#42290a" stroke-width="1" stroke-dasharray="3 2"/>
    <line x1="101.4" y1="139.5" x2="101.4" y2="556" stroke="#c87a20" stroke-width="1" stroke-dasharray="3 2"/>
    <line x1="34" y1="516.5" x2="949" y2="516.5" stroke="#d8d8d8" stroke-width="1" stroke-dasharray="3 2.4"/>
    <path d="M-46.1 308.9 L-45.0 200.0M-17.9 221.0 L-17.1 318.9M13.6 284.1 L14.5 200.0M41.6 221.0 L42.7 363.7M71.7 419.0 L72.1 373.6M102.0 344.9 L102.5 405.0M131.1 419.0 L131.9 340.4M161.3 325.7 L161.9 405.0M191.9 293.5 L192.9 200.0M220.8 331.9 L221.4 405.0M251.4 285.6 L252.3 200.0M280.4 345.5 L280.8 405.0M310.4 330.4 L311.8 200.0M340.2 387.2 L340.3 405.0M370.0 317.1 L371.3 200.0M399.0 299.1 L399.8 405.0M428.4 419.0 L428.9 374.7M457.8 221.0 L458.7 338.1M487.9 419.0 L489.2 292.5M517.3 221.0 L518.0 321.6M547.9 366.3 L549.6 200.0M576.7 221.0 L577.3 292.2M606.8 419.0 L607.6 341.9M636.2 221.0 L637.4 374.8M667.7 284.8 L668.6 200.0M695.7 221.0 L696.5 326.5M725.7 419.0 L726.6 333.7M755.1 221.0 L755.8 306.1M786.1 330.8 L787.5 200.0M815.6 356.7 L816.0 405.0M845.1 377.0 L846.9 200.0M874.4 271.8 L875.4 405.0M905.4 298.0 L906.4 200.0M933.5 221.0 L934.5 355.3M963.6 419.0 L964.8 300.0M993.0 221.0 L993.7 312.0" fill="none" stroke="#7c7000" stroke-width="1.2"/>
    <path d="M-45.0 200.0 L-44.8 186.9 L-44.3 203.0 L-43.7 238.3 L-42.2 216.1 L-40.7 230.5 L-39.2 217.2 L-37.7 227.0 L-36.2 223.1 L-35.1 222.4 L-33.9 221.7 L-32.9 218.8 L-31.5 222.8 L-30.2 223.1 L-28.8 219.5 L-27.3 218.7 L-26.3 220.3 L-25.1 223.7 L-24.0 221.6 L-22.7 218.5 L-21.4 218.8 L-20.4 221.3 L-19.1 221.4 L-17.9 220.3M-16.5 405.0 L-16.3 467.2 L-15.7 440.0 L-14.7 399.8 L-13.2 425.0 L-11.7 411.3 L-10.2 423.1 L-8.7 416.5 L-7.2 420.4 L-5.7 416.8 L-4.5 418.6 L-3.4 420.2 L-2.4 421.6 L-1.0 418.8 L0.5 416.8 L1.8 420.2 L3.1 420.6 L4.5 419.0 L5.7 417.5 L6.8 419.6 L8.1 422.0 L9.5 417.5 L10.7 417.0 L11.7 418.0 L12.2 419.0M14.5 200.0 L14.7 186.4 L15.2 203.0 L15.8 238.5 L17.3 215.0 L18.8 230.6 L20.3 220.5 L21.8 225.3 L23.3 220.7 L24.7 224.3 L26.2 221.6 L27.4 219.3 L28.8 222.0 L29.9 222.1 L31.0 221.9 L32.3 220.0 L33.4 217.9 L34.6 221.3 L35.9 223.9 L37.2 220.0 L38.5 219.2 L39.6 221.6 L41.6 221.1M43.0 405.0 L43.2 465.6 L43.8 440.0 L44.8 397.4 L46.3 426.5 L47.8 409.2 L49.3 421.3 L50.8 413.8 L52.3 420.7 L53.3 419.8 L54.4 417.7 L55.6 416.1 L57.0 420.2 L58.1 420.5 L59.3 419.0 L60.3 418.1 L61.8 418.5 L63.1 419.8 L64.1 419.6 L65.3 418.3 L66.3 415.8 L67.8 420.1 L68.9 420.6 L69.9 418.5 L71.7 419.0M74.0 200.0 L74.2 190.2 L74.7 203.0 L75.3 239.5 L76.8 214.7 L78.3 232.1 L79.8 219.1 L81.3 228.1 L82.8 222.6 L84.2 224.1 L85.6 220.6 L87.0 221.4 L88.1 223.1 L89.3 221.4 L90.3 219.7 L91.4 219.7 L92.9 221.8 L94.4 223.7 L95.9 218.9 L97.0 218.3 L98.1 220.5 L99.4 223.4 L101.1 219.9M102.5 405.0 L102.7 464.3 L103.3 440.0 L104.3 399.6 L105.8 427.6 L107.3 412.1 L108.8 424.0 L110.3 414.9 L111.8 419.9 L112.9 418.2 L114.4 419.4 L115.6 422.4 L117.0 418.1 L118.0 416.3 L119.5 419.9 L120.6 421.8 L122.1 419.5 L123.2 417.1 L124.3 416.6 L125.8 421.1 L127.0 420.5 L128.3 417.8 L129.7 417.1 L130.8 419.7 L131.1 419.0M133.4 200.0 L133.6 187.6 L134.1 203.0 L134.7 238.5 L136.2 217.6 L137.7 230.4 L139.2 218.8 L140.7 227.3 L142.2 222.4 L143.7 223.3 L144.9 220.6 L146.0 219.4 L147.0 220.0 L148.4 222.4 L149.7 221.9 L151.0 218.7 L152.2 220.8 L153.6 221.9 L154.9 220.3 L156.0 219.5 L157.3 220.0 L158.7 223.5 L160.5 220.3M161.9 405.0 L162.1 466.8 L162.7 440.0 L163.7 398.8 L165.2 426.1 L166.7 410.9 L168.2 424.8 L169.7 415.8 L171.2 419.7 L172.3 417.6 L173.8 421.1 L174.9 420.3 L176.1 418.0 L177.2 416.1 L178.6 419.6 L180.0 420.1 L181.4 419.2 L182.4 417.9 L183.9 418.1 L185.4 420.4 L186.6 419.7 L188.1 415.8 L189.3 418.9 L190.6 419.0M192.9 200.0 L193.1 187.9 L193.6 203.0 L194.2 238.1 L195.7 216.2 L197.2 230.8 L198.7 217.1 L200.2 226.3 L201.7 223.4 L202.7 224.7 L204.1 221.6 L205.2 219.0 L206.2 222.2 L207.3 222.3 L208.5 222.9 L209.9 218.5 L211.0 221.2 L212.3 223.2 L213.3 221.2 L214.7 219.1 L215.7 220.0 L217.0 222.3 L218.1 223.4 L219.1 221.7 L220.0 219.5M221.4 405.0 L221.6 465.1 L222.2 440.0 L223.2 397.5 L224.7 426.1 L226.2 410.0 L227.7 421.4 L229.2 413.6 L230.7 419.9 L231.8 420.7 L233.2 417.7 L234.5 416.7 L235.6 418.6 L236.8 419.9 L238.1 418.8 L239.2 417.0 L240.7 418.2 L242.1 420.7 L243.4 419.4 L244.5 416.8 L245.9 420.1 L247.1 421.5 L248.4 419.0 L249.6 416.1 L250.0 419.0M252.3 200.0 L252.5 186.4 L253.0 203.0 L253.6 239.0 L255.1 214.7 L256.6 229.3 L258.1 220.4 L259.6 228.5 L261.1 220.7 L262.3 219.2 L263.5 220.6 L264.7 222.9 L266.2 222.5 L267.5 218.6 L269.0 221.1 L270.1 221.8 L271.3 221.1 L272.6 218.1 L273.8 219.1 L275.0 221.4 L276.2 220.5 L277.2 218.8 L278.3 218.8 L279.4 220.8M280.8 405.0 L281.0 467.5 L281.6 440.0 L282.6 398.6 L284.1 425.3 L285.6 412.9 L287.1 421.6 L288.6 415.9 L290.1 419.0 L291.6 422.2 L292.9 419.0 L294.3 416.7 L295.5 420.2 L297.0 421.5 L298.4 417.8 L299.8 418.3 L301.2 419.9 L302.2 419.5 L303.4 416.8 L304.8 417.3 L306.1 420.2 L307.4 420.1 L308.4 418.7 L309.5 419.0M311.8 200.0 L312.0 189.2 L312.5 203.0 L313.1 238.3 L314.6 216.9 L316.1 230.0 L317.6 217.3 L319.1 226.1 L320.6 220.5 L322.0 224.9 L323.2 221.8 L324.5 220.1 L325.8 221.2 L327.2 222.1 L328.2 221.5 L329.6 218.8 L330.9 218.8 L331.9 221.7 L333.3 222.7 L334.6 218.7 L335.9 219.0 L337.1 220.7 L338.9 219.1M340.3 405.0 L340.5 464.1 L341.1 440.0 L342.1 398.8 L343.6 427.3 L345.1 412.9 L346.6 422.8 L348.1 414.1 L349.6 420.4 L350.7 421.5 L351.8 420.7 L353.3 416.5 L354.7 418.6 L356.1 421.6 L357.2 420.9 L358.5 416.0 L359.5 417.4 L360.7 419.5 L361.8 420.3 L362.9 419.4 L363.9 417.5 L365.3 417.5 L366.8 421.2 L368.3 417.5 L369.0 419.0M371.3 200.0 L371.5 192.0 L372.0 203.0 L372.6 239.4 L374.1 215.7 L375.6 230.1 L377.1 217.2 L378.6 225.4 L380.1 222.2 L381.5 219.1 L382.7 220.6 L383.8 222.6 L385.2 223.5 L386.6 219.8 L388.1 221.7 L389.4 223.5 L390.4 222.8 L391.6 220.1 L392.9 218.8 L394.0 222.7 L395.0 222.5 L396.2 219.9 L397.6 219.6 L398.4 220.5M399.8 405.0 L400.0 465.6 L400.6 440.0 L401.6 397.7 L403.1 424.6 L404.6 409.8 L406.1 424.6 L407.6 415.0 L409.1 422.2 L410.6 417.8 L411.6 416.8 L412.7 419.3 L413.7 420.5 L414.8 420.0 L416.3 417.8 L417.5 418.3 L418.8 420.6 L419.9 418.7 L421.1 418.6 L422.1 417.1 L423.4 420.8 L424.6 420.0 L425.7 418.1 L426.9 417.8 L428.4 419.0M430.7 200.0 L430.9 186.1 L431.4 203.0 L432.0 240.8 L433.5 217.6 L435.0 230.9 L436.5 219.3 L438.0 225.0 L439.5 224.6 L440.9 221.4 L442.4 219.6 L443.5 221.6 L444.7 223.6 L446.2 220.6 L447.5 220.3 L448.8 222.3 L449.8 223.6 L450.9 221.9 L452.2 218.3 L453.3 219.6 L454.6 223.1 L455.7 220.4 L456.9 219.0 L457.8 219.2M459.2 405.0 L459.4 465.2 L460.0 440.0 L461.0 398.8 L462.5 427.8 L464.0 411.6 L465.5 424.5 L467.0 414.9 L468.5 416.9 L470.0 419.9 L471.2 420.1 L472.4 420.3 L473.6 416.7 L474.9 419.5 L476.1 419.5 L477.2 420.2 L478.6 416.7 L480.0 418.4 L481.2 419.6 L482.7 419.2 L484.1 416.1 L485.2 418.2 L486.4 421.2 L487.9 419.0M490.2 200.0 L490.4 187.3 L490.9 203.0 L491.5 240.7 L493.0 217.8 L494.5 229.6 L496.0 218.6 L497.5 225.9 L499.0 222.8 L500.0 221.0 L501.2 220.8 L502.6 221.8 L504.1 224.5 L505.3 220.7 L506.8 219.8 L507.8 221.0 L509.0 222.5 L510.1 221.2 L511.1 219.1 L512.3 220.1 L513.4 222.1 L514.5 222.2 L515.9 221.2 L517.3 218.6M518.7 405.0 L518.9 467.7 L519.5 440.0 L520.5 397.8 L522.0 425.5 L523.5 412.6 L525.0 421.1 L526.5 414.6 L528.0 418.6 L529.0 416.5 L530.0 421.0 L531.2 421.9 L532.6 418.4 L533.7 418.4 L535.1 418.5 L536.4 420.6 L537.6 418.0 L538.9 418.0 L540.2 419.9 L541.3 419.9 L542.5 420.9 L544.0 416.5 L545.1 417.4 L546.3 421.3 L547.3 419.0M549.6 200.0 L549.8 190.4 L550.3 203.0 L550.9 241.1 L552.4 216.4 L553.9 230.3 L555.4 218.3 L556.9 226.4 L558.4 221.5 L559.5 220.8 L560.7 218.9 L561.7 222.3 L562.8 224.7 L564.3 222.0 L565.4 218.2 L566.5 220.8 L567.8 222.9 L568.9 221.5 L570.2 219.4 L571.6 221.1 L573.0 221.6 L574.4 220.2 L575.7 218.1 L576.7 219.1M578.1 405.0 L578.3 464.6 L578.9 440.0 L579.9 400.5 L581.4 426.3 L582.9 410.3 L584.4 422.6 L585.9 417.0 L587.4 416.9 L588.8 419.4 L590.3 420.3 L591.6 420.2 L593.0 418.3 L594.0 418.1 L595.1 420.0 L596.6 419.9 L598.0 416.6 L599.5 418.7 L600.6 421.5 L602.1 417.8 L603.4 417.0 L604.5 417.7 L605.5 419.5 L606.8 419.0M609.1 200.0 L609.3 189.9 L609.8 203.0 L610.4 238.0 L611.9 215.3 L613.4 231.7 L614.9 217.7 L616.4 226.2 L617.9 224.5 L619.2 221.1 L620.2 219.7 L621.5 220.7 L622.5 221.7 L623.9 222.6 L625.0 219.8 L626.5 219.1 L627.8 221.8 L629.0 223.6 L630.5 219.1 L631.6 219.5 L632.7 219.8 L634.2 222.1 L636.2 219.7M637.6 405.0 L637.8 464.7 L638.4 440.0 L639.4 397.1 L640.9 426.2 L642.4 411.6 L643.9 424.6 L645.4 413.4 L646.9 420.9 L648.2 419.6 L649.3 418.0 L650.8 417.2 L652.0 421.6 L653.5 419.2 L654.5 418.8 L656.0 418.0 L657.1 421.4 L658.3 421.6 L659.6 418.6 L660.6 417.6 L661.8 418.6 L663.2 421.5 L664.3 418.0 L665.5 416.6 L666.3 419.0M668.6 200.0 L668.8 187.5 L669.3 203.0 L669.9 241.6 L671.4 214.2 L672.9 231.2 L674.4 220.0 L675.9 225.2 L677.4 222.7 L678.7 222.4 L680.0 219.2 L681.2 220.9 L682.4 223.5 L683.6 222.3 L684.6 220.4 L685.9 218.7 L687.3 222.8 L688.5 221.8 L689.7 219.0 L690.8 218.6 L691.8 220.1 L693.1 221.3 L694.4 219.8 L695.7 220.8M697.1 405.0 L697.3 466.0 L697.9 440.0 L698.9 398.5 L700.4 427.8 L701.9 409.5 L703.4 424.4 L704.9 417.0 L706.4 418.8 L707.5 419.0 L708.7 421.5 L710.2 419.9 L711.6 418.9 L712.6 417.0 L714.0 419.3 L715.4 419.9 L716.8 416.5 L718.1 418.5 L719.2 419.2 L720.4 420.1 L721.4 417.7 L722.5 417.8 L723.9 419.4 L725.0 421.1 L725.7 419.0M728.0 200.0 L728.2 189.8 L728.7 203.0 L729.3 241.5 L730.8 216.2 L732.3 231.3 L733.8 220.5 L735.3 225.4 L736.8 220.2 L738.0 221.8 L739.1 224.6 L740.4 222.3 L741.8 219.5 L742.9 220.6 L743.9 222.9 L745.1 223.4 L746.6 220.4 L747.9 218.7 L748.9 219.9 L750.0 223.0 L751.2 221.2 L752.6 217.6 L753.7 220.2 L755.1 218.5M756.5 405.0 L756.7 465.4 L757.3 440.0 L758.3 397.9 L759.8 426.3 L761.3 411.4 L762.8 421.8 L764.3 415.5 L765.8 416.5 L767.3 418.9 L768.4 420.3 L769.7 420.6 L771.1 417.0 L772.2 417.3 L773.5 421.2 L774.7 420.2 L775.9 418.4 L777.3 417.3 L778.7 419.5 L780.0 419.2 L781.1 415.9 L782.5 416.4 L783.8 421.5 L784.9 419.2 L785.2 419.0M787.5 200.0 L787.7 189.8 L788.2 203.0 L788.8 238.7 L790.3 215.2 L791.8 230.2 L793.3 217.2 L794.8 228.6 L796.3 220.8 L797.3 223.3 L798.7 223.4 L800.0 220.4 L801.1 218.4 L802.3 220.1 L803.4 223.8 L804.8 222.2 L806.1 218.4 L807.4 220.6 L808.8 222.9 L809.9 221.5 L811.4 217.8 L812.9 219.5 L814.6 219.2M816.0 405.0 L816.2 467.0 L816.8 440.0 L817.8 398.3 L819.3 427.5 L820.8 410.3 L822.3 422.0 L823.8 416.6 L825.3 422.0 L826.6 420.6 L827.8 418.2 L829.2 420.1 L830.4 421.8 L831.7 419.0 L832.8 417.6 L833.8 418.8 L834.9 418.8 L836.0 422.0 L837.1 417.8 L838.2 415.7 L839.5 418.7 L840.9 421.3 L841.9 419.8 L843.1 417.8 L844.6 419.0M846.9 200.0 L847.1 186.4 L847.6 203.0 L848.2 241.7 L849.7 217.8 L851.2 229.4 L852.7 217.8 L854.2 225.4 L855.7 223.1 L857.1 220.0 L858.6 222.0 L859.7 222.4 L860.8 223.0 L861.9 219.3 L863.1 218.5 L864.2 221.6 L865.6 222.3 L866.7 221.3 L868.0 219.8 L869.3 220.2 L870.5 222.4 L871.9 219.5 L873.2 218.6 L874.0 221.1M875.4 405.0 L875.6 464.7 L876.2 440.0 L877.2 397.0 L878.7 424.8 L880.2 412.0 L881.7 424.9 L883.2 413.0 L884.7 419.9 L886.1 416.6 L887.4 418.5 L888.8 420.6 L890.3 418.4 L891.4 417.7 L892.6 417.7 L893.9 419.9 L895.3 419.6 L896.7 417.2 L897.9 418.3 L899.1 421.7 L900.2 420.8 L901.2 416.7 L902.3 417.8 L903.5 418.9 L904.1 419.0M906.4 200.0 L906.6 188.8 L907.1 203.0 L907.7 241.0 L909.2 217.0 L910.7 231.6 L912.2 218.4 L913.7 226.3 L915.2 222.0 L916.5 224.2 L917.6 222.5 L919.0 219.9 L920.1 219.9 L921.5 222.2 L922.6 222.2 L924.0 220.6 L925.0 218.3 L926.2 220.9 L927.4 221.9 L928.6 219.9 L930.1 219.3 L931.1 221.6 L932.2 222.0 L933.5 220.9M934.9 405.0 L935.1 464.8 L935.7 440.0 L936.7 399.6 L938.2 424.4 L939.7 409.8 L941.2 422.6 L942.7 413.1 L944.2 418.2 L945.5 419.2 L946.9 421.2 L947.9 420.3 L949.1 418.1 L950.6 418.3 L951.9 421.6 L953.1 419.2 L954.4 418.1 L955.8 418.8 L957.3 421.2 L958.6 418.9 L959.7 417.1 L960.8 417.2 L962.2 420.8 L963.6 419.0M965.9 200.0 L966.1 188.5 L966.6 203.0 L967.2 240.5 L968.7 215.6 L970.2 231.7 L971.7 220.7 L973.2 225.7 L974.7 220.6 L975.9 222.0 L977.3 222.2 L978.6 219.9 L980.0 220.7 L981.3 221.0 L982.6 223.1 L983.9 220.3 L985.2 220.0 L986.5 221.4 L988.0 221.7 L989.3 219.2 L990.7 218.0 L992.2 221.6 L993.0 219.3M994.4 405.0 L994.6 465.7 L995.2 440.0 L996.2 398.7 L997.7 426.8 L999.2 410.4 L1000.7 422.1 L1002.2 413.9 L1003.7 421.5 L1004.9 416.9 L1006.3 418.3 L1007.4 419.9 L1008.8 421.1 L1010.1 417.4 L1011.4 417.3 L1012.9 420.5 L1014.2 420.5 L1015.6 416.8 L1016.8 418.1 L1017.8 421.1 L1019.0 421.2 L1020.1 417.4 L1021.3 416.5 L1022.4 417.2 L1023.0 419.0M-47.3 419.0 L-46.1 308.9M-17.1 318.9 L-16.5 405.0M12.2 419.0 L13.6 284.1M42.7 363.7 L43.0 405.0M72.1 373.6 L74.0 200.0M101.1 221.0 L102.0 344.9M131.9 340.4 L133.4 200.0M160.5 221.0 L161.3 325.7M190.6 419.0 L191.9 293.5M220.0 221.0 L220.8 331.9M250.0 419.0 L251.4 285.6M279.4 221.0 L280.4 345.5M309.5 419.0 L310.4 330.4M338.9 221.0 L340.2 387.2M369.0 419.0 L370.0 317.1M398.4 221.0 L399.0 299.1M428.9 374.7 L430.7 200.0M458.7 338.1 L459.2 405.0M489.2 292.5 L490.2 200.0M518.0 321.6 L518.7 405.0M547.3 419.0 L547.9 366.3M577.3 292.2 L578.1 405.0M607.6 341.9 L609.1 200.0M637.4 374.8 L637.6 405.0M666.3 419.0 L667.7 284.8M696.5 326.5 L697.1 405.0M726.6 333.7 L728.0 200.0M755.8 306.1 L756.5 405.0M785.2 419.0 L786.1 330.8M814.6 221.0 L815.6 356.7M844.6 419.0 L845.1 377.0M874.0 221.0 L874.4 271.8M904.1 419.0 L905.4 298.0M934.5 355.3 L934.9 405.0M964.8 300.0 L965.9 200.0M993.7 312.0 L994.4 405.0" fill="none" stroke="#e8d400" stroke-width="1"/>
  </g>
  <line x1="330.5" y1="132.7" x2="647.5" y2="132.7" stroke="#9a9a9a" stroke-width="1.2"/>
  <path d="M332.5 129.5 L330.5 129.5 L330.5 136 L332.5 136 M645.5 129.5 L647.5 129.5 L647.5 136 L645.5 136" fill="none" stroke="#9a9a9a" stroke-width="1"/>
  <path d="M485 126.6 L492 126.6 L488.5 129.6 Z" fill="#e8881a"/>
  <rect x="485" y="130" width="7" height="7" fill="#2a2a2a" stroke="#e8881a" stroke-width="1"/>
  <text x="488.5" y="135.8" font-size="6.5" fill="#e8881a" text-anchor="middle" font-family="Liberation Sans">T</text>
  <path d="M483 139.8 L494 139.8 L488.5 145 Z" fill="#f08c1e"/>
  <path d="M483.3 145.4 L493.7 145.4 L493.7 156 L490.5 156 L488.5 159.5 L486.5 156 L483.3 156 Z" fill="#000" stroke="#f08c1e" stroke-width="1.1"/>
  <text x="488.5" y="154.2" font-size="8.5" fill="#f08c1e" text-anchor="middle" font-family="Liberation Sans">T</text>
  <path d="M942.6 143 L961 143 L961 161.6 Z" fill="#5a5a5a"/>
  <circle cx="957" cy="147.3" r="2.6" fill="none" stroke="#bdbdbd" stroke-width="0.9"/>
  <line x1="955.2" y1="149.2" x2="952" y2="152.5" stroke="#bdbdbd" stroke-width="1"/>
  <path d="M15 510 L29 510 L33.5 516.5 L29 523 L15 523 Z" fill="#f0e000"/>
  <text x="16.5" y="519.7" font-size="8" fill="#000" font-family="Liberation Sans">C 1</text>
  <path d="M953 333.5 L960.2 328 L960.2 339 Z" fill="#e8d400"/>
  <rect x="959" y="332.5" width="6" height="2" fill="#e8d400"/>
  <rect x="970" y="286.5" width="2" height="2" fill="#d0d0d0"/>
  <rect x="970" y="291.5" width="2" height="2" fill="#d0d0d0"/>
  <rect x="970" y="296.3" width="2" height="2" fill="#d0d0d0"/>
</svg>
<div class="t" style="top:180.17px;font-size:7.00px;line-height:7.00px;color:#e6d600;right:109.10px;">2.72 V</div>
<div class="t" style="top:221.77px;font-size:7.00px;line-height:7.00px;color:#e6d600;right:109.10px;">2.38 V</div>
<div class="t" style="top:263.37px;font-size:7.00px;line-height:7.00px;color:#e6d600;right:109.10px;">2.04 V</div>
<div class="t" style="top:304.97px;font-size:7.00px;line-height:7.00px;color:#e6d600;right:109.10px;">1.70 V</div>
<div class="t" style="top:346.57px;font-size:7.00px;line-height:7.00px;color:#e6d600;right:109.10px;">1.36 V</div>
<div class="t" style="top:388.17px;font-size:7.00px;line-height:7.00px;color:#e6d600;right:109.10px;">1.02 V</div>
<div class="t" style="top:429.77px;font-size:7.00px;line-height:7.00px;color:#e6d600;right:109.10px;">680 mV</div>
<div class="t" style="top:471.37px;font-size:7.00px;line-height:7.00px;color:#e6d600;right:109.10px;">340 mV</div>
<div class="t" style="top:512.97px;font-size:7.00px;line-height:7.00px;color:#e6d600;right:109.10px;">0 V</div>
<div class="t" style="top:547.41px;font-size:6.60px;line-height:6.60px;color:#c8c8c8;left:107.60px;width:0;display:flex;justify-content:center;"><span>-160 ns</span></div>
<div class="t" style="top:547.41px;font-size:6.60px;line-height:6.60px;color:#c8c8c8;left:202.80px;width:0;display:flex;justify-content:center;"><span>-120 ns</span></div>
<div class="t" style="top:547.41px;font-size:6.60px;line-height:6.60px;color:#c8c8c8;left:298.00px;width:0;display:flex;justify-content:center;"><span>-80 ns</span></div>
<div class="t" style="top:547.41px;font-size:6.60px;line-height:6.60px;color:#c8c8c8;left:393.20px;width:0;display:flex;justify-content:center;"><span>-40 ns</span></div>
<div class="t" style="top:547.41px;font-size:6.60px;line-height:6.60px;color:#c8c8c8;left:488.40px;width:0;display:flex;justify-content:center;"><span>0 s</span></div>
<div class="t" style="top:547.41px;font-size:6.60px;line-height:6.60px;color:#c8c8c8;left:583.60px;width:0;display:flex;justify-content:center;"><span>40 ns</span></div>
<div class="t" style="top:547.41px;font-size:6.60px;line-height:6.60px;color:#c8c8c8;left:678.80px;width:0;display:flex;justify-content:center;"><span>80 ns</span></div>
<div class="t" style="top:547.41px;font-size:6.60px;line-height:6.60px;color:#c8c8c8;left:774.00px;width:0;display:flex;justify-content:center;"><span>120 ns</span></div>
<div class="t" style="top:547.41px;font-size:6.60px;line-height:6.60px;color:#c8c8c8;left:869.20px;width:0;display:flex;justify-content:center;"><span>160 ns</span></div>
<div class="a" style="left:975.3px;top:28px;width:87px;height:529px;border-left:1px solid #45403b;border-top:1px solid #6a6058;border-bottom:1px solid #3e3a36"></div>
<div class="t" style="top:31.15px;font-size:8.80px;line-height:8.80px;color:#ececec;font-weight:bold;left:1018.80px;width:0;display:flex;justify-content:center;"><span>Add New...</span></div>
<div class="a btn" style="left:978.7px;top:45.1px;width:34.3px;height:19.4px"></div><div class="t" style="top:51.73px;font-size:8.00px;line-height:8.00px;color:#e6e6e6;left:995.85px;width:0;display:flex;justify-content:center;"><span>Cursors</span></div><div class="a btn" style="left:1017.7px;top:45.1px;width:34.3px;height:19.4px"></div><div class="t" style="top:51.73px;font-size:8.00px;line-height:8.00px;color:#e6e6e6;left:1034.85px;width:0;display:flex;justify-content:center;"><span>Note</span></div><div class="a btn" style="left:978.7px;top:69.5px;width:34.3px;height:19.4px"></div><div class="t" style="top:76.13px;font-size:8.00px;line-height:8.00px;color:#e6e6e6;left:995.85px;width:0;display:flex;justify-content:center;"><span>Measure</span></div><div class="a btn" style="left:1017.7px;top:69.5px;width:34.3px;height:19.4px"></div><div class="t" style="top:76.13px;font-size:8.00px;line-height:8.00px;color:#e6e6e6;left:1034.85px;width:0;display:flex;justify-content:center;"><span>Search</span></div><div class="a btn" style="left:978.7px;top:94.3px;width:34.3px;height:19.4px"></div><div class="t" style="top:96.70px;font-size:7.80px;line-height:7.80px;color:#e6e6e6;left:995.85px;width:0;display:flex;justify-content:center;"><span>Results</span></div><div class="t" style="top:105.20px;font-size:7.80px;line-height:7.80px;color:#e6e6e6;left:995.85px;width:0;display:flex;justify-content:center;"><span>Table</span></div><div class="a btn" style="left:1017.7px;top:94.3px;width:34.3px;height:19.4px"></div><div class="t" style="top:100.93px;font-size:8.00px;line-height:8.00px;color:#e6e6e6;left:1034.85px;width:0;display:flex;justify-content:center;"><span>Plot</span></div>
<div class="a" style="left:977.00px;top:119.00px;width:80.00px;height:1.00px;background:#6a5e55;"></div>
<div class="a" style="left:977.1px;top:126.2px;width:84.1px;height:33.4px;background:#c9c9c9;border-radius:3.0px;overflow:hidden"><div class="a" style="left:0.00px;top:0.00px;width:84.10px;height:10.40px;background:#575757;"></div><div class="t" style="top:1.61px;font-size:7.90px;line-height:7.90px;color:#dfe6ec;left:3.00px;">Meas 1</div><div class="a" style="left:69.70px;top:3.00px;width:11.00px;height:5.30px;background:#f2e11a;border-radius:1.2px"></div><div class="a" style="left:74.90px;top:4.30px;width:0.80px;height:2.80px;background:#6a6200;"></div><div class="t" style="top:13.88px;font-size:7.70px;line-height:7.70px;color:#2a2a2a;left:3.30px;">Positive Pulse Width</div><div class="t" style="top:24.48px;font-size:7.70px;line-height:7.70px;color:#2a2a2a;left:3.30px;">&#956;': 12.33 ns</div></div><div class="a" style="left:977.1px;top:163.1px;width:84.1px;height:33.4px;background:#c9c9c9;border-radius:3.0px;overflow:hidden"><div class="a" style="left:0.00px;top:0.00px;width:84.10px;height:10.40px;background:#575757;"></div><div class="t" style="top:1.61px;font-size:7.90px;line-height:7.90px;color:#dfe6ec;left:3.00px;">Meas 2</div><div class="a" style="left:69.70px;top:3.00px;width:11.00px;height:5.30px;background:#f2e11a;border-radius:1.2px"></div><div class="a" style="left:74.90px;top:4.30px;width:0.80px;height:2.80px;background:#6a6200;"></div><div class="t" style="top:13.88px;font-size:7.70px;line-height:7.70px;color:#2a2a2a;left:3.30px;">Negative Pulse Width</div><div class="t" style="top:24.48px;font-size:7.70px;line-height:7.70px;color:#2a2a2a;left:3.30px;">&#956;': 12.67 ns</div></div><div class="a" style="left:977.1px;top:200.3px;width:84.1px;height:33.4px;background:#c9c9c9;border-radius:3.0px;overflow:hidden"><div class="a" style="left:0.00px;top:0.00px;width:84.10px;height:10.40px;background:#575757;"></div><div class="t" style="top:1.61px;font-size:7.90px;line-height:7.90px;color:#dfe6ec;left:3.00px;">Meas 3</div><div class="a" style="left:69.70px;top:3.00px;width:11.00px;height:5.30px;background:#f2e11a;border-radius:1.2px"></div><div class="a" style="left:74.90px;top:4.30px;width:0.80px;height:2.80px;background:#6a6200;"></div><div class="t" style="top:13.88px;font-size:7.70px;line-height:7.70px;color:#2a2a2a;left:3.30px;">Period</div><div class="t" style="top:24.48px;font-size:7.70px;line-height:7.70px;color:#2a2a2a;left:3.30px;">&#956;': 25.00 ns</div></div><div class="a" style="left:977.1px;top:237.2px;width:84.1px;height:33.4px;background:#c9c9c9;border-radius:3.0px;overflow:hidden"><div class="a" style="left:0.00px;top:0.00px;width:84.10px;height:10.40px;background:#050505;"></div><div class="t" style="top:1.61px;font-size:7.90px;line-height:7.90px;color:#ecdc22;left:3.00px;">Meas 4</div><div class="a" style="left:69.70px;top:3.00px;width:11.00px;height:5.30px;background:#f2e11a;border-radius:1.2px"></div><div class="a" style="left:74.90px;top:4.30px;width:0.80px;height:2.80px;background:#6a6200;"></div><div class="t" style="top:13.88px;font-size:7.70px;line-height:7.70px;color:#2a2a2a;left:3.30px;">Frequency</div><div class="t" style="top:24.48px;font-size:7.70px;line-height:7.70px;color:#2a2a2a;left:3.30px;">&#956;': 40.00 MHz</div></div>
<div class="a" style="left:977.00px;top:528.00px;width:80.00px;height:1.00px;background:#6a5e55;"></div>
<div class="a btn" style="left:978.8px;top:533.9px;width:34px;height:19.9px"></div>
<svg class="a" style="left:0;top:0" width="1072" height="696">
  <rect x="989" y="537" width="1" height="1" fill="#d0d0d0"/><rect x="991" y="537" width="1" height="1" fill="#d0d0d0"/><rect x="993" y="537" width="1" height="1" fill="#d0d0d0"/><rect x="995" y="537" width="1" height="1" fill="#d0d0d0"/><rect x="997" y="537" width="1" height="1" fill="#d0d0d0"/><rect x="989" y="539" width="1" height="1" fill="#d0d0d0"/><rect x="989" y="541" width="1" height="1" fill="#d0d0d0"/><rect x="989" y="543" width="1" height="1" fill="#d0d0d0"/><rect x="989" y="545" width="1" height="1" fill="#d0d0d0"/><rect x="991" y="545" width="1" height="1" fill="#d0d0d0"/><rect x="997" y="539" width="1" height="1" fill="#d0d0d0"/>
  <circle cx="996.5" cy="545.3" r="2.7" fill="#6a6a6a" stroke="#d8d8d8" stroke-width="1"/>
  <line x1="998.4" y1="547.3" x2="1001.6" y2="550.5" stroke="#d8d8d8" stroke-width="1.5"/>
  <path d="M1033 538.5 L1046.5 538.5 L1045 552.5 L1034.5 552.5 Z" fill="none" stroke="#d0d0d0" stroke-width="0.9"/>
  <path d="M1032.6 538.3 Q1032.6 535.2 1039.7 535.2 Q1046.8 535.2 1046.8 538.3" fill="none" stroke="#d0d0d0" stroke-width="0.9"/>
  <path d="M1037 540.5 L1037.3 551 M1039.7 540.5 L1039.7 551 M1042.5 540.5 L1042.2 551" stroke="#bdbdbd" stroke-width="0.7"/>
</svg>
<div class="a" style="left:11.00px;top:557.00px;width:1050.60px;height:45.30px;background:#2d2d2d;"></div>
<div class="a" style="left:11.00px;top:556.20px;width:956.00px;height:0.80px;background:#8a8a8a;"></div>
<div class="a" style="left:12.90px;top:558.00px;width:49.00px;height:44.80px;background:#c9c9c9;border-radius:2px"></div>
<div class="a" style="left:12.90px;top:558.00px;width:49.00px;height:11.00px;background:#f4e422;border-radius:2px 2px 0 0"></div>
<div class="t" style="top:559.24px;font-size:8.70px;line-height:8.70px;color:#111;left:15.70px;">Ch 1</div>
<div class="t" style="top:571.67px;font-size:8.30px;line-height:8.30px;color:#2a2a2a;left:16.30px;">340 mV/div</div>
<div class="t" style="top:582.47px;font-size:8.30px;line-height:8.30px;color:#2a2a2a;left:16.30px;">50 &#937;</div>
<div class="t" style="top:591.97px;font-size:8.30px;line-height:8.30px;color:#2a2a2a;left:16.30px;">1 GHz</div>
<div class="a btn" style="left:386.1px;top:559.1px;width:21.9px;height:43.7px"></div><div class="a" style="left:388.10px;top:563.10px;width:17.90px;height:1.60px;background:#28c4c8;"></div><div class="t" style="top:575.59px;font-size:11.00px;line-height:11.00px;color:#e6e6e6;left:397.05px;width:0;display:flex;justify-content:center;"><span>2</span></div><div class="a btn" style="left:410.8px;top:559.1px;width:21.9px;height:43.7px"></div><div class="a" style="left:412.80px;top:563.10px;width:17.90px;height:1.60px;background:#dc3c50;"></div><div class="t" style="top:575.59px;font-size:11.00px;line-height:11.00px;color:#e6e6e6;left:421.75px;width:0;display:flex;justify-content:center;"><span>3</span></div><div class="a btn" style="left:435.5px;top:559.1px;width:21.9px;height:43.7px"></div><div class="a" style="left:437.50px;top:563.10px;width:17.90px;height:1.60px;background:#80c42c;"></div><div class="t" style="top:575.59px;font-size:11.00px;line-height:11.00px;color:#e6e6e6;left:446.45px;width:0;display:flex;justify-content:center;"><span>4</span></div><div class="a btn" style="left:460.2px;top:559.1px;width:21.9px;height:43.7px"></div><div class="a" style="left:462.20px;top:563.10px;width:17.90px;height:1.60px;background:#ec8a22;"></div><div class="t" style="top:575.59px;font-size:11.00px;line-height:11.00px;color:#e6e6e6;left:471.15px;width:0;display:flex;justify-content:center;"><span>5</span></div><div class="a btn" style="left:484.9px;top:559.1px;width:21.9px;height:43.7px"></div><div class="a" style="left:486.90px;top:563.10px;width:17.90px;height:1.60px;background:#2c2cb8;"></div><div class="t" style="top:575.59px;font-size:11.00px;line-height:11.00px;color:#e6e6e6;left:495.85px;width:0;display:flex;justify-content:center;"><span>6</span></div><div class="a btn" style="left:509.6px;top:559.1px;width:21.9px;height:43.7px"></div><div class="a" style="left:511.60px;top:563.10px;width:17.90px;height:1.60px;background:#cc4ca4;"></div><div class="t" style="top:575.59px;font-size:11.00px;line-height:11.00px;color:#e6e6e6;left:520.55px;width:0;display:flex;justify-content:center;"><span>7</span></div><div class="a btn" style="left:534.3px;top:559.1px;width:21.9px;height:43.7px"></div><div class="a" style="left:536.30px;top:563.10px;width:17.90px;height:1.60px;background:#20c488;"></div><div class="t" style="top:575.59px;font-size:11.00px;line-height:11.00px;color:#e6e6e6;left:545.25px;width:0;display:flex;justify-content:center;"><span>8</span></div><div class="a btn" style="left:567.5px;top:559.1px;width:21.6px;height:43.6px"></div><div class="a" style="left:569.80px;top:563.00px;width:17.00px;height:1.60px;background:#ec8a22;"></div><div class="t" style="top:568.81px;font-size:7.90px;line-height:7.90px;color:#dedede;left:578.30px;width:0;display:flex;justify-content:center;"><span>Add</span></div><div class="t" style="top:578.06px;font-size:7.90px;line-height:7.90px;color:#dedede;left:578.30px;width:0;display:flex;justify-content:center;"><span>New</span></div><div class="t" style="top:587.31px;font-size:7.90px;line-height:7.90px;color:#dedede;left:578.30px;width:0;display:flex;justify-content:center;"><span>Math</span></div><div class="a btn" style="left:592.3px;top:559.1px;width:21.6px;height:43.6px"></div><div class="a" style="left:594.60px;top:563.00px;width:17.00px;height:1.60px;background:#c8c8c8;"></div><div class="t" style="top:568.81px;font-size:7.90px;line-height:7.90px;color:#dedede;left:603.10px;width:0;display:flex;justify-content:center;"><span>Add</span></div><div class="t" style="top:578.06px;font-size:7.90px;line-height:7.90px;color:#dedede;left:603.10px;width:0;display:flex;justify-content:center;"><span>New</span></div><div class="t" style="top:587.31px;font-size:7.90px;line-height:7.90px;color:#dedede;left:603.10px;width:0;display:flex;justify-content:center;"><span>Ref</span></div><div class="a btn" style="left:617.1px;top:559.1px;width:21.6px;height:43.6px"></div><div class="a" style="left:619.40px;top:563.00px;width:17.00px;height:1.60px;background:#b050e0;"></div><div class="t" style="top:568.81px;font-size:7.90px;line-height:7.90px;color:#dedede;left:627.90px;width:0;display:flex;justify-content:center;"><span>Add</span></div><div class="t" style="top:578.06px;font-size:7.90px;line-height:7.90px;color:#dedede;left:627.90px;width:0;display:flex;justify-content:center;"><span>New</span></div><div class="t" style="top:587.31px;font-size:7.90px;line-height:7.90px;color:#dedede;left:627.90px;width:0;display:flex;justify-content:center;"><span>Bus</span></div>
<div class="a" style="left:561.20px;top:559.00px;width:1.00px;height:44.00px;background:#55504a;"></div>
<div class="a" style="left:644.20px;top:559.00px;width:1.00px;height:44.00px;background:#55504a;"></div>
<div class="a btn" style="left:650.4px;top:559.1px;width:24px;height:43.6px"></div>
<div class="a" style="left:652.50px;top:563.00px;width:20.00px;height:1.60px;background:#555;"></div>
<div class="t" style="top:577.40px;font-size:7.80px;line-height:7.80px;color:#d8d8d8;left:652.00px;">DVM</div>
<div class="a" style="left:828.50px;top:559.20px;width:87.30px;height:43.40px;background:#c9c9c9;border-radius:2px"></div>
<div class="a" style="left:828.50px;top:559.20px;width:87.30px;height:9.40px;background:#5a5a5a;border-radius:2px 2px 0 0"></div>
<div class="t" style="top:559.96px;font-size:8.20px;line-height:8.20px;color:#e8e8e8;left:832.00px;">Trigger</div>
<svg class="a" style="left:852px;top:572px" width="8" height="8"><path d="M1 7 L7 1" stroke="#555" stroke-width="0.9"/></svg>
<div class="t" style="top:572.73px;font-size:8.00px;line-height:8.00px;color:#333;left:867.00px;">1.5 V</div>
<div class="a" style="left:921.30px;top:559.20px;width:81.60px;height:43.40px;background:#c9c9c9;border-radius:2px"></div>
<div class="a" style="left:921.30px;top:559.20px;width:81.60px;height:9.40px;background:#5a5a5a;border-radius:2px 2px 0 0"></div>
<div class="t" style="top:559.62px;font-size:8.60px;line-height:8.60px;color:#e8e8e8;left:924.10px;">Acquisition</div>
<div class="t" style="top:572.98px;font-size:7.70px;line-height:7.70px;color:#222;left:925.00px;">Auto,</div>
<div class="t" style="top:572.98px;font-size:7.70px;line-height:7.70px;color:#222;left:955.90px;">Analyze</div>
<div class="t" style="top:582.78px;font-size:7.70px;line-height:7.70px;color:#222;left:925.00px;">High Res: 12 bits</div>
<div class="t" style="top:592.58px;font-size:7.70px;line-height:7.70px;color:#222;left:925.00px;">2.352 kAcqs</div>
<div class="a" style="left:1009.00px;top:559.20px;width:48.70px;height:18.90px;background:#14c814;border-radius:3px"></div>
<div class="t" style="top:564.27px;font-size:7.60px;line-height:7.60px;color:#fff;left:1033.10px;width:0;display:flex;justify-content:center;"><span>Triggered</span></div>
<svg class="a" style="left:0;top:0" width="1072" height="696"><defs><linearGradient id="og" gradientUnits="userSpaceOnUse" x1="0" y1="285" x2="0" y2="692"><stop offset="0" stop-color="#006e8c" stop-opacity="0.37"/><stop offset="1" stop-color="#006e8c" stop-opacity="0.70"/></linearGradient></defs><path d="M665 372 L980.5 285.7 L1063 285.7 L848 692 L665 692 Z" fill="url(#og)"/></svg>
<div class="a" style="left:664.8px;top:372.2px;width:183.2px;height:319.4px;background:#2b2b2b;border:2px solid #f4f4f4;border-left-width:1.4px;border-bottom-width:1px;overflow:hidden">
<div class="a" style="left:-2.4px;top:9.2px;width:178.1px;height:71.6px;background:#c9c9c9;border-radius:6.3px;overflow:hidden"><div class="a" style="left:0.00px;top:0.00px;width:178.10px;height:21.40px;background:#575757;"></div><div class="t" style="top:3.24px;font-size:17.20px;line-height:17.20px;color:#dfe6ec;left:6.50px;">Meas 1</div><div class="a" style="left:147.60px;top:5.70px;width:23.60px;height:11.50px;background:#f2e11a;border-radius:2.5px"></div><div class="t" style="top:6.86px;font-size:9.78px;line-height:9.78px;color:#222;left:159.40px;width:0;display:flex;justify-content:center;"><span>1</span></div><div class="t" style="top:30.05px;font-size:16.60px;line-height:16.60px;color:#2a2a2a;left:8.10px;">Positive Pulse Width</div><div class="t" style="top:53.25px;font-size:16.60px;line-height:16.60px;color:#2a2a2a;left:8.10px;">&#956;': 12.33 ns</div></div><div class="a" style="left:-2.4px;top:86.6px;width:178.1px;height:71.6px;background:#c9c9c9;border-radius:6.3px;overflow:hidden"><div class="a" style="left:0.00px;top:0.00px;width:178.10px;height:21.40px;background:#575757;"></div><div class="t" style="top:3.24px;font-size:17.20px;line-height:17.20px;color:#dfe6ec;left:6.50px;">Meas 2</div><div class="a" style="left:147.60px;top:5.70px;width:23.60px;height:11.50px;background:#f2e11a;border-radius:2.5px"></div><div class="t" style="top:6.86px;font-size:9.78px;line-height:9.78px;color:#222;left:159.40px;width:0;display:flex;justify-content:center;"><span>1</span></div><div class="t" style="top:30.05px;font-size:16.60px;line-height:16.60px;color:#2a2a2a;left:8.10px;">Negative Pulse Width</div><div class="t" style="top:53.25px;font-size:16.60px;line-height:16.60px;color:#2a2a2a;left:8.10px;">&#956;': 12.67 ns</div></div><div class="a" style="left:-2.4px;top:164.8px;width:178.1px;height:71.6px;background:#c9c9c9;border-radius:6.3px;overflow:hidden"><div class="a" style="left:0.00px;top:0.00px;width:178.10px;height:21.40px;background:#575757;"></div><div class="t" style="top:3.24px;font-size:17.20px;line-height:17.20px;color:#dfe6ec;left:6.50px;">Meas 3</div><div class="a" style="left:147.60px;top:5.70px;width:23.60px;height:11.50px;background:#f2e11a;border-radius:2.5px"></div><div class="t" style="top:6.86px;font-size:9.78px;line-height:9.78px;color:#222;left:159.40px;width:0;display:flex;justify-content:center;"><span>1</span></div><div class="t" style="top:30.05px;font-size:16.60px;line-height:16.60px;color:#2a2a2a;left:8.10px;">Period</div><div class="t" style="top:53.25px;font-size:16.60px;line-height:16.60px;color:#2a2a2a;left:8.10px;">&#956;': 25.00 ns</div></div><div class="a" style="left:-2.4px;top:243.5px;width:178.1px;height:71.6px;background:#c9c9c9;border-radius:6.3px;overflow:hidden"><div class="a" style="left:0.00px;top:0.00px;width:178.10px;height:21.40px;background:#050505;"></div><div class="t" style="top:3.24px;font-size:17.20px;line-height:17.20px;color:#ecdc22;left:6.50px;">Meas 4</div><div class="a" style="left:147.60px;top:5.70px;width:23.60px;height:11.50px;background:#f2e11a;border-radius:2.5px"></div><div class="t" style="top:6.86px;font-size:9.78px;line-height:9.78px;color:#222;left:159.40px;width:0;display:flex;justify-content:center;"><span>1</span></div><div class="t" style="top:30.05px;font-size:16.60px;line-height:16.60px;color:#2a2a2a;left:8.10px;">Frequency</div><div class="t" style="top:53.25px;font-size:16.60px;line-height:16.60px;color:#2a2a2a;left:8.10px;">&#956;': 40.00 MHz</div></div>
</div>
</body></html>
